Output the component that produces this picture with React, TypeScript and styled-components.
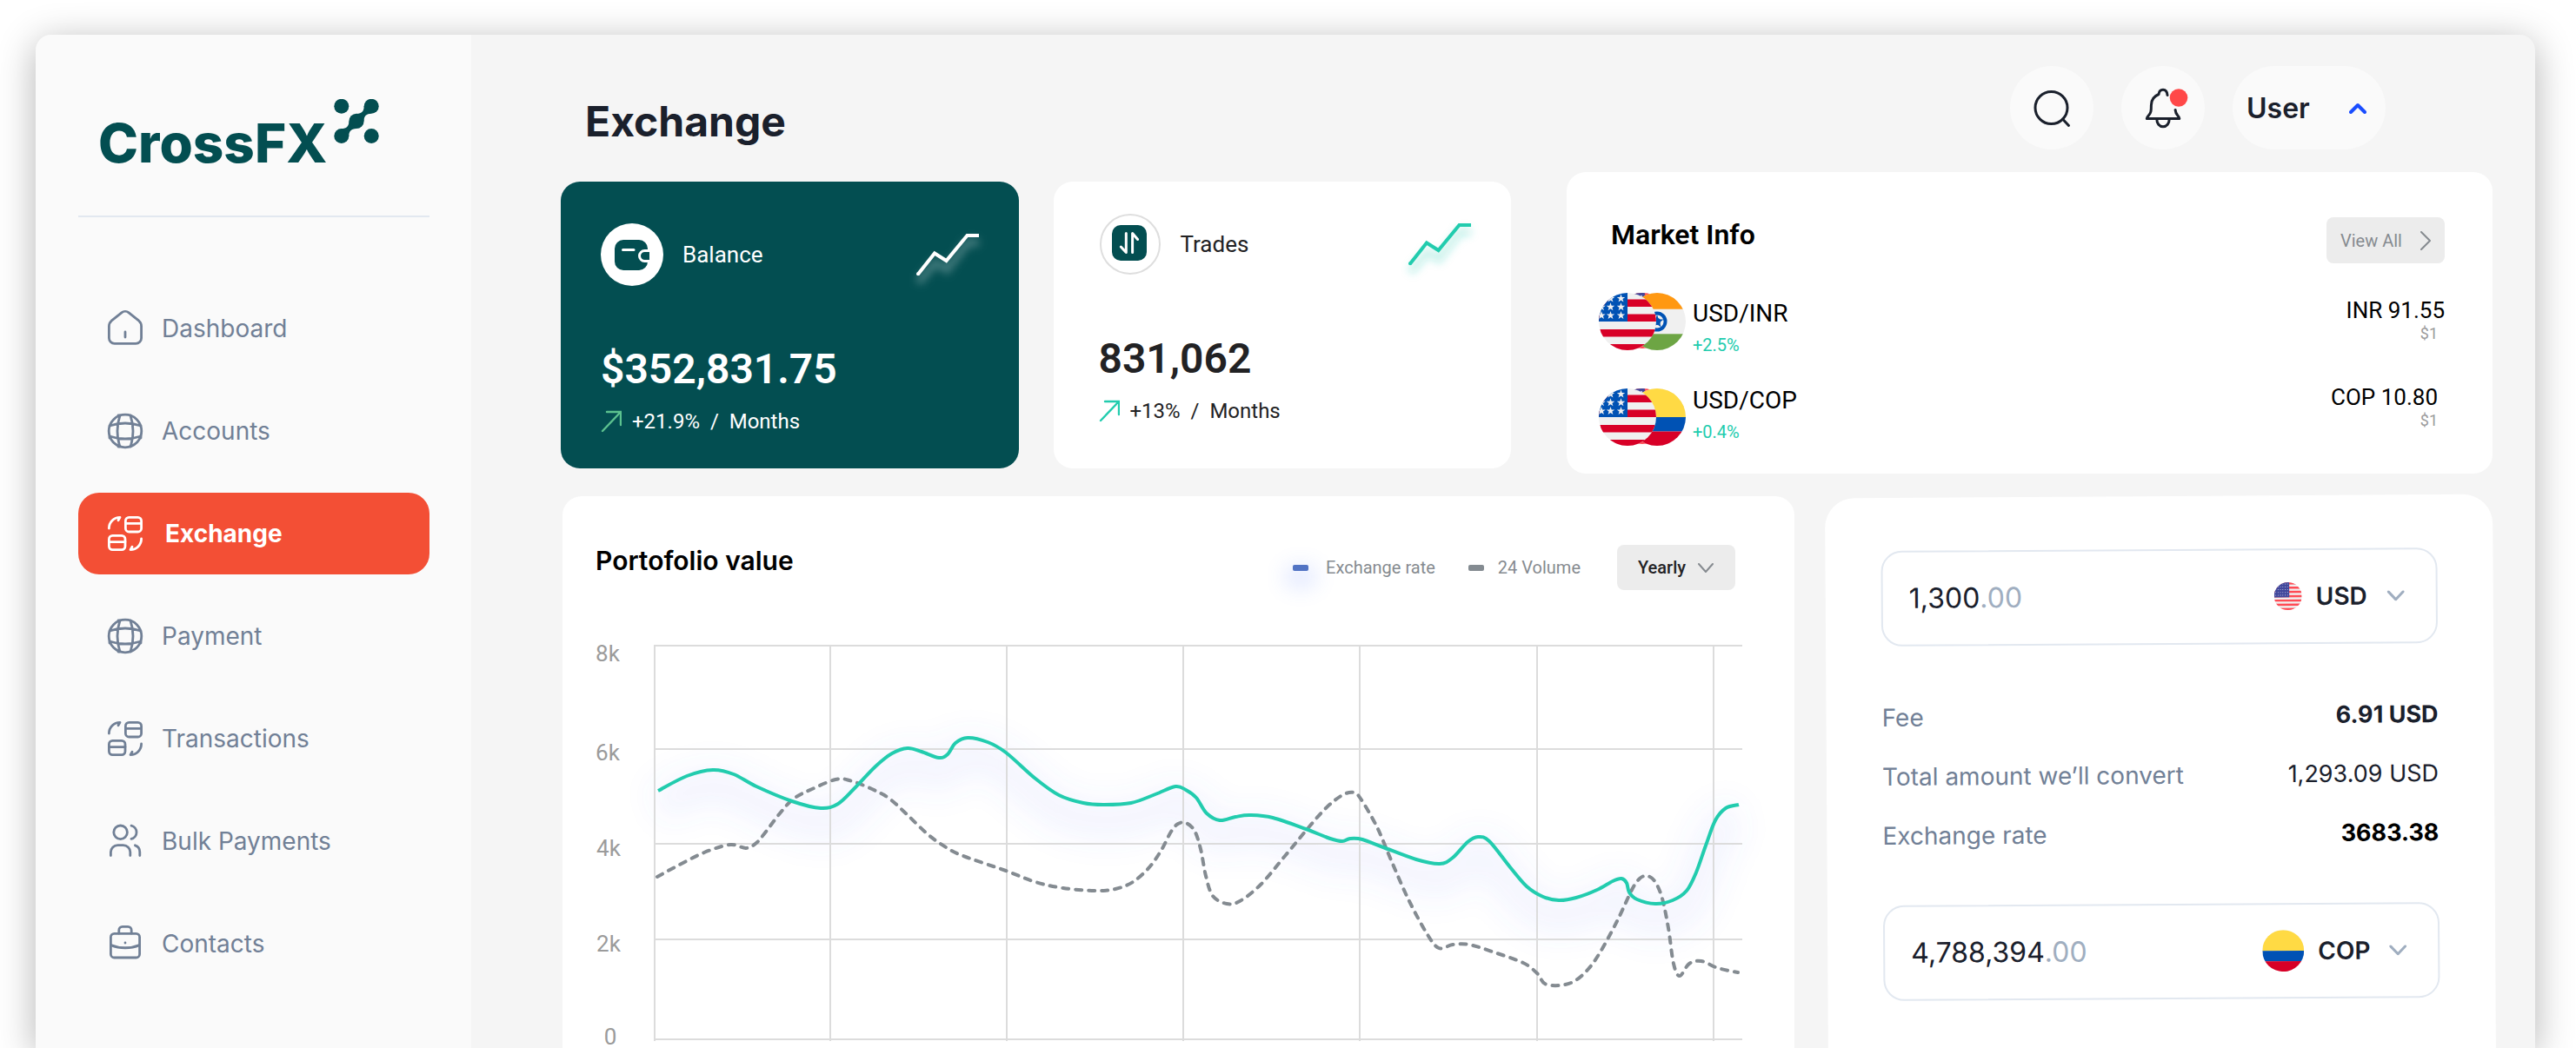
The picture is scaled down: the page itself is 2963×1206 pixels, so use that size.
import React from "react";
import styled, { createGlobalStyle, css } from "styled-components";

const inter = `Inter, "Noto Sans", sans-serif`;
const roboto = `Roboto, "Noto Sans", sans-serif`;

const colors = {
  brand: "#034e51",
  accent: "#f34f35",
  mint: "#22ccae",
  ink: "#1a202c",
  slate: "#718096",
  mist: "#a0aec0",
  line: "#e2e8f0",
  grey: "#868b90",
};

const GlobalStyle = createGlobalStyle`
  *, *::before, *::after { box-sizing: border-box; }
  body { margin: 0; background: #fff; font-family: ${inter}; color: ${colors.ink}; }
  h1, h2, p, ul, dl, dd { margin: 0; padding: 0; }
  ul { list-style: none; }
  a { text-decoration: none; color: inherit; }
  button, input, select { font: inherit; color: inherit; border: 0; margin: 0; background: none; }
  svg { display: block; flex: none; }
`;

/* ---------- shell ---------- */

const Page = styled.div`
  display: flex;
  min-height: 100vh;
  padding: 40px 47px 0 41px;
  overflow: hidden;
`;

const Shell = styled.div`
  flex: 1;
  display: flex;
  min-width: 0;
  border-radius: 18px 18px 0 0;
  overflow: hidden;
  background: #f5f5f5;
  box-shadow: 0 8px 44px rgba(0, 0, 0, 0.3);
`;

const Sidebar = styled.aside`
  flex: 0 0 501px;
  padding: 74px 48px 0 49px;
  background: #fafafa;
`;

const Logo = styled.a`
  display: flex;
  align-items: flex-start;
  gap: 8px;
  padding-left: 23px;
  padding-bottom: 57px;
  border-bottom: 2px solid ${colors.line};
  color: ${colors.brand};
`;

const LogoText = styled.span`
  padding-top: 25px;
  font: 800 62px/52px ${inter};
`;

const Nav = styled.nav`
  margin-top: 81px;
`;

const NavList = styled.ul`
  display: flex;
  flex-direction: column;
  gap: 24px;
`;

const NavLink = styled.a<{ $active?: boolean }>`
  display: flex;
  align-items: center;
  gap: 18px;
  height: 94px;
  padding-left: 30px;
  border-radius: 24px;
  font-size: 28px;
  line-height: 36px;
  color: ${colors.slate};
  ${(p) =>
    p.$active &&
    css`
      gap: 22px;
      font-weight: 700;
      color: #fff;
      background: ${colors.accent};
    `}
`;

const Main = styled.main`
  flex: 1;
  min-width: 0;
  display: flex;
  flex-direction: column;
`;

/* ---------- header ---------- */

const Header = styled.header`
  display: flex;
  align-items: center;
  gap: 32px;
  padding: 36px 172px 26px 131px;
`;

const PageTitle = styled.h1`
  flex: 1;
  align-self: flex-end;
  font-size: 48px;
  font-weight: 700;
  line-height: 64px;
`;

const RoundButton = styled.button`
  width: 96px;
  height: 96px;
  padding: 0;
  border-radius: 50%;
  background: #fafafa;
`;

const UserButton = styled.button`
  display: flex;
  align-items: center;
  justify-content: space-between;
  width: 176px;
  height: 96px;
  padding: 0 22px 0 16px;
  border-radius: 48px;
  background: #fafafa;
  font-size: 32px;
  font-weight: 600;
`;

/* ---------- layout rows ---------- */

const TopRow = styled.div`
  display: grid;
  grid-template-columns: 1093fr 1065fr;
  gap: 64px;
  padding: 0 49px 0 103px;
`;

const Stats = styled.div`
  display: grid;
  grid-template-columns: 1fr 1fr;
  gap: 40px;
  padding: 11px 0 6px;
`;

const BottomRow = styled.div`
  flex: 1;
  display: grid;
  grid-template-columns: 1417fr 768fr;
  gap: 37px;
  padding: 26px 47px 0 105px;
`;

const Card = styled.section`
  min-width: 0;
  border-radius: 22px;
  background: #fff;
`;

/* ---------- stat cards ---------- */

const StatCard = styled(Card)<{ $dark?: boolean }>`
  padding: ${(p) => (p.$dark ? "48px 45px 40px 46px" : "36px 45px 52px 52px")};
  font-family: ${roboto};
  color: ${(p) => (p.$dark ? "#fff" : "#222224")};
  background: ${(p) => (p.$dark ? colors.brand : "#fff")};
`;

const StatHead = styled.div`
  display: flex;
  align-items: center;
  gap: 22px;
`;

const StatLabel = styled.h2`
  flex: 1;
  font-size: 26px;
  font-weight: 400;
  line-height: 36px;
`;

const StatValue = styled.p`
  margin-top: 68px;
  font-size: 48px;
  font-weight: 600;
  line-height: 56px;
`;

const StatChange = styled.p`
  display: flex;
  align-items: center;
  gap: 12px;
  margin-top: 18px;
  font-size: 24px;
  line-height: 28px;
  white-space: pre;
`;

/* ---------- market info ---------- */

const MarketCard = styled(Card)`
  padding: 52px 55px 32px 37px;
  font-family: ${roboto};
  color: #000;
`;

const MarketHead = styled.div`
  display: flex;
  align-items: flex-start;
  justify-content: space-between;
  padding-left: 14px;
`;

const MarketTitle = styled.h2`
  font-size: 32px;
  font-weight: 600;
  line-height: 40px;
`;

const ViewAll = styled.a`
  display: flex;
  align-items: center;
  justify-content: space-between;
  width: 136px;
  height: 53px;
  padding: 0 16px;
  border-radius: 8px;
  background: #ececec;
  font-size: 20px;
  color: ${colors.grey};
`;

const PairList = styled.ul`
  display: flex;
  flex-direction: column;
  gap: 24px;
  margin-top: 34px;
`;

const PairRow = styled.li`
  display: flex;
  align-items: flex-end;
  gap: 8px;
  height: 76px;
`;

const FlagStack = styled.div<{ $raised?: boolean }>`
  display: flex;
  align-self: ${(p) => (p.$raised ? "flex-start" : "flex-end")};
  isolation: isolate;
  > * { position: relative; }
  > :nth-child(1) { z-index: 2; }
  > :nth-child(2) { z-index: 0; margin: 0 -48px; }
  > :nth-child(3) { z-index: 1; }
`;

const PairName = styled.div`
  flex: 1;
  font-size: 28px;
  line-height: 40px;
  small {
    display: block;
    font-size: 20px;
    line-height: 32px;
    color: ${colors.mint};
  }
`;

const PairRate = styled.div<{ $inset?: boolean }>`
  align-self: flex-start;
  padding-top: 6px;
  padding-right: ${(p) => (p.$inset ? "8px" : "0")};
  font-size: 26px;
  line-height: 28px;
  text-align: right;
  small {
    display: block;
    padding-right: ${(p) => (p.$inset ? "0" : "8px")};
    font-size: 18px;
    line-height: 26px;
    color: #9b9b9b;
  }
`;

/* ---------- portfolio chart ---------- */

const ChartCard = styled(Card)`
  padding: 56px 60px 0 38px;
  border-radius: 22px 22px 0 0;
  font-family: ${roboto};
`;

const ChartHead = styled.div`
  display: flex;
  align-items: center;
  padding-right: 8px;
`;

const ChartTitle = styled.h2`
  flex: 1;
  align-self: flex-start;
  font-family: ${inter};
  font-size: 30px;
  font-weight: 600;
  line-height: 36px;
  color: #000;
`;

const LegendItem = styled.span<{ $glow?: boolean }>`
  display: flex;
  align-items: center;
  gap: ${(p) => (p.$glow ? "20px" : "16px")};
  margin-right: ${(p) => (p.$glow ? "38px" : "42px")};
  font-size: 20px;
  color: ${colors.grey};
  &::before {
    content: "";
    width: 18px;
    height: 7px;
    border-radius: 2px;
    background: ${(p) => (p.$glow ? "#5274c4" : "#848b91")};
    box-shadow: ${(p) => (p.$glow ? "0 10px 24px 8px rgba(80, 115, 255, 0.18)" : "none")};
  }
`;

const Dropdown = styled.span`
  display: inline-grid;
  align-items: center;
  > * { grid-area: 1 / 1; }
  > svg { justify-self: end; pointer-events: none; }
`;

const PeriodDropdown = styled(Dropdown)`
  width: 136px;
  height: 52px;
  border-radius: 8px;
  background: #ececec;
  > svg { margin-right: 25px; }
`;

const PeriodSelect = styled.select`
  appearance: none;
  width: 100%;
  height: 100%;
  padding: 0 0 0 24px;
  font-size: 20px;
  font-weight: 500;
  color: #222224;
`;

const ChartSvg = styled.svg`
  width: 100%;
  height: auto;
  margin-top: 61px;
  overflow: visible;
  text {
    font: 26px ${roboto};
    fill: #9b9b9b;
    text-anchor: middle;
  }
`;

/* ---------- converter ---------- */

const Converter = styled(Card)`
  margin-bottom: -12px;
  padding: 61px 64px 0;
  border-radius: 34px 34px 0 0;
  transform: rotate(-0.35deg);
`;

const Field = styled.div`
  display: flex;
  align-items: center;
  height: 110px;
  padding: 0 36px 0 30px;
  border: 2px solid ${colors.line};
  border-radius: 24px;
`;

const AmountLabel = styled.label`
  flex: 1;
  display: flex;
  align-items: center;
  font-size: 32px;
  line-height: 40px;
  color: ${colors.mist};
`;

const AmountInput = styled.input`
  field-sizing: content;
  height: 40px;
  padding: 0;
  color: ${colors.ink};
`;

const CurrencyDropdown = styled(Dropdown)`
  width: 102px;
  margin-left: 16px;
`;

const CurrencySelect = styled.select`
  appearance: none;
  width: 100%;
  padding: 0;
  font-size: 28px;
  font-weight: 600;
`;

const Breakdown = styled.dl`
  display: flex;
  flex-direction: column;
  gap: 36px;
  padding: 66px 0 64px;
`;

const BreakdownRow = styled.div`
  display: flex;
  justify-content: space-between;
  line-height: 32px;
  font-size: 28px;
  color: ${colors.slate};
`;

const BreakdownValue = styled.dd<{ $bold?: boolean; $black?: boolean }>`
  font-size: 27px;
  font-weight: ${(p) => (p.$bold ? 700 : 400)};
  color: ${(p) => (p.$black ? "#000" : colors.ink)};
`;

/* ---------- icons ---------- */

const NavIcon = ({ children }: { children: React.ReactNode }) => (
  <svg width="48" height="48" viewBox="0 0 24 24" fill="none" stroke="currentColor" strokeWidth="1.4" strokeLinecap="round" strokeLinejoin="round" aria-hidden>
    {children}
  </svg>
);

const HomeIcon = () => (
  <NavIcon>
    <path d="M9.9 2.9 4.1 7.6C3.2 8.4 2.7 9.5 2.7 10.7v6.8a3.2 3.2 0 0 0 3.2 3.2h12.2a3.2 3.2 0 0 0 3.2-3.2v-6.8c0-1.2-.5-2.3-1.4-3.1L14.1 2.9c-1.2-1-3-1-4.2 0Z" />
    <path d="M12 17v-3" />
  </NavIcon>
);

const GlobeIcon = () => (
  <NavIcon>
    <circle cx="12" cy="12" r="9.4" />
    <path d="M8 3h1a28.424 28.424 0 0 0 0 18H8M15 3a28.424 28.424 0 0 1 0 18M3 16v-1a28.424 28.424 0 0 0 18 0v1M3 9a28.424 28.424 0 0 1 18 0" />
  </NavIcon>
);

const SwapCardsIcon = () => (
  <NavIcon>
    <rect x="12.2" y="2.7" width="9.1" height="8.3" rx="2" />
    <path d="M12.2 6.2h9.1" />
    <rect x="2.7" y="13.2" width="9.3" height="8.1" rx="2" />
    <path d="M2.7 16.8H12M2.7 9c0-3.5 2.8-6.3 6.3-6.3L8 4.4M21.3 15c0 3.5-2.8 6.3-6.3 6.3l1-1.7" />
  </NavIcon>
);

const UsersIcon = () => (
  <NavIcon>
    <circle cx="9.3" cy="6.9" r="3.9" />
    <path d="M3.7 20.3v-2a4 4 0 0 1 4-4h3.2a4 4 0 0 1 4 4v2M15.5 3.1a3.9 3.9 0 0 1 0 7.6M17.7 14.4c1.7.5 2.7 2 2.7 3.9v2" />
  </NavIcon>
);

const BriefcaseIcon = () => (
  <NavIcon>
    <rect x="3.7" y="6.2" width="16.6" height="13.8" rx="2" />
    <path d="M8.4 6V4.2a2 2 0 0 1 2-2h3.2a2 2 0 0 1 2 2V6M3.8 12.8c5 2.1 11.4 2.1 16.4 0M12 11.5v.01" />
  </NavIcon>
);

const LogoMark = () => (
  <svg width="52" height="52" viewBox="0 0 52 52" fill="currentColor" aria-hidden>
    <circle cx="8.8" cy="8.3" r="8.5" />
    <circle cx="43.2" cy="8.3" r="8.5" />
    <circle cx="8.8" cy="42.5" r="8.5" />
    <circle cx="43.2" cy="42.5" r="8.5" />
    <circle cx="26" cy="25.4" r="8.6" />
    <path d="M34.7 8c0 5.5-2.2 9-8.7 9l8.6 8.5c0-6 3-8.7 8.6-8.7ZM17.3 43c0-5.5 2.2-9 8.7-9l-8.6-8.5c0 6-3 8.5-8.6 8.5Z" />
  </svg>
);

const SearchIcon = () => (
  <svg width="96" height="96" viewBox="0 0 96 96" fill="none" stroke={colors.ink} strokeWidth="3" strokeLinecap="round" aria-hidden>
    <circle cx="47.5" cy="48" r="18.5" />
    <path d="m60.5 61 7 7.5" />
  </svg>
);

const BellIcon = () => (
  <svg width="96" height="96" viewBox="0 0 96 96" fill="none" stroke={colors.ink} strokeWidth="3" strokeLinecap="round" strokeLinejoin="round" aria-hidden>
    <path d="M53 33.5c-.3-3.9-2.2-6.3-5-6.3s-4.7 2.2-5 5.3c-5.6 2.3-8.6 7.3-8.6 12.5 0 6.5-.2 9-2.9 11.8-1.1 1.2-1.9 2.2-2.2 3.7h37.5c-.3-1.5-1-2.5-2.1-3.7-1.6-1.7-2.3-3.6-2.6-6.3" />
    <path d="M40.8 61c0 5 2.9 8.7 7.2 8.7s7.2-3.7 7.2-8.7" />
    <circle cx="66" cy="36.5" r="10.3" fill="#ff4848" stroke="none" />
  </svg>
);

const Chevron = ({ w, h, color, stroke }: { w: number; h: number; color: string; stroke: number }) => (
  <svg width={w} height={h} viewBox={`0 0 ${w} ${h}`} fill="none" stroke={color} strokeWidth={stroke} strokeLinecap="round" strokeLinejoin="round" aria-hidden>
    <path d={`M${stroke / 2} ${stroke / 2} ${w / 2} ${h - stroke / 2} ${w - stroke / 2} ${stroke / 2}`} />
  </svg>
);

const WalletBadge = () => (
  <svg width="72" height="72" viewBox="0 0 72 72" aria-hidden>
    <circle cx="36" cy="36" r="36" fill="#fff" />
    <rect x="16" y="19" width="38" height="35" rx="10" fill={colors.brand} />
    <path d="M58 31.5h-7.5a5.5 5.5 0 0 0 0 12H58" fill={colors.brand} stroke="#fff" strokeWidth="3" />
    <path d="M56 29.5h4v16h-4z" fill="#fff" />
    <path d="M25.5 30.5h12.5" stroke="#fff" strokeWidth="3" strokeLinecap="round" />
  </svg>
);

const TradesBadge = () => (
  <svg width="72" height="72" viewBox="0 0 72 72" fill="none" aria-hidden>
    <circle cx="36" cy="36" r="34" fill="#fff" stroke="#dedede" strokeWidth="2" />
    <rect x="15" y="14" width="40" height="41" rx="10" fill={colors.brand} />
    <path d="M31.3 23.5v22l-6-6.5M38.6 45.5v-22l6 7" stroke="#fff" strokeWidth="3" strokeLinecap="round" strokeLinejoin="round" />
  </svg>
);

const Spark = ({ color, id, glow }: { color: string; id: string; glow: number }) => (
  <svg width="74" height="50" viewBox="0 0 74 50" fill="none" overflow="visible" aria-hidden>
    <filter id={id} x="-40%" y="-40%" width="180%" height="200%">
      <feGaussianBlur stdDeviation="5" />
    </filter>
    <path d="M3 57 23 34l13 8L60 11h13" stroke={color} strokeWidth="9" strokeOpacity={glow} filter={`url(#${id})`} />
    <path d="M3 47.5 22 23.5l13.5 8.5L59.5 3H73" stroke={color} strokeWidth="4" />
    <circle cx="3" cy="47.3" r="2" fill={color} />
  </svg>
);

const UpArrow = ({ color }: { color: string }) => (
  <svg width="24" height="28" viewBox="0 0 24 28" fill="none" stroke={color} strokeWidth="2.4" strokeLinecap="round" aria-hidden>
    <path d="M2 25 23 3M7 3h16v15" />
  </svg>
);

/* ---------- flags ---------- */

const star = (cx: number, cy: number, r: number) =>
  Array.from({ length: 10 }, (_, i) => {
    const a = -Math.PI / 2 + (i * Math.PI) / 5;
    const d = i % 2 ? r * 0.4 : r;
    return `${(cx + d * Math.cos(a)).toFixed(2)},${(cy + d * Math.sin(a)).toFixed(2)}`;
  }).join(" ");

const RoundFlag = ({ size, id, label, children }: { size: number; id: string; label: string; children: React.ReactNode }) => (
  <svg width={size} height={size} viewBox="0 0 66 66" role="img" aria-label={label}>
    <clipPath id={id}>
      <circle cx="33" cy="33" r="33" />
    </clipPath>
    <g clipPath={`url(#${id})`}>
      <rect width="66" height="66" fill="#f0f0f0" />
      {children}
    </g>
  </svg>
);

const UsFlag = ({ id }: { id: string }) => (
  <RoundFlag size={66} id={id} label="United States">
    {[7.5, 24.5, 42, 59].map((y) => (
      <rect key={y} y={y} width="66" height="8.5" fill="#d80027" />
    ))}
    <rect width="33" height="33" fill="#0052b4" />
    {[3, 13.5, 25.5].map((x) => [6.5, 16.3, 26].map((y) => <polygon key={`${x}-${y}`} points={star(x, y, 5)} fill="#f0f0f0" />))}
  </RoundFlag>
);

const SoftUsFlag = ({ id, size }: { id: string; size: number }) => (
  <RoundFlag size={size} id={id} label="United States">
    {Array.from({ length: 7 }, (_, i) => (
      <rect key={i} y={i * 10.15} width="66" height="5.1" fill="#ff4b55" />
    ))}
    <rect width="36" height="35.5" fill="#41479b" />
    {Array.from({ length: 30 }, (_, i) => (
      <circle key={i} cx={4 + (i % 6) * 5.6} cy={4 + Math.floor(i / 6) * 6.6} r="1.1" fill="#c9cbe6" />
    ))}
  </RoundFlag>
);

const IndiaFlag = ({ id }: { id: string }) => (
  <RoundFlag size={66} id={id} label="India">
    <rect width="66" height="18.7" fill="#ff9811" />
    <rect y="47.3" width="66" height="19" fill="#6da544" />
    <circle cx="33" cy="33" r="11.5" fill="#0052b4" />
    <circle cx="33" cy="33" r="7.6" fill="#f0f0f0" />
    <polygon points={star(33, 33, 8)} fill="#0052b4" />
    <circle cx="33" cy="33" r="4" fill="#0052b4" />
  </RoundFlag>
);

const ColombiaFlag = ({ id, size }: { id: string; size: number }) => (
  <RoundFlag size={size} id={id} label="Colombia">
    <rect width="66" height="33" fill="#ffda44" />
    <rect y="33" width="66" height="16.5" fill="#0052b4" />
    <rect y="49.5" width="66" height="16.5" fill="#d80027" />
  </RoundFlag>
);

/* ---------- chart ---------- */

type Point = [number, number];

const ratePoints: Point[] = [
  [5, 168], [38, 151], [68, 144], [92, 149], [118, 163], [159, 180], [192, 188], [212, 183], [232, 164], [255, 140],
  [274, 125], [292, 119], [308, 123], [328, 130], [338, 126], [347, 113], [361, 107], [384, 112], [405, 124],
  [439, 154], [466, 173], [494, 182], [517, 184], [549, 182], [577, 172], [600, 163], [612, 167], [624, 176],
  [636, 194], [651, 202], [669, 198], [686, 196], [712, 199], [750, 212], [778, 223], [792, 226], [801, 223],
  [815, 224], [839, 233], [877, 247], [904, 252], [919, 245], [936, 227], [948, 221], [961, 226], [985, 256],
  [1004, 278], [1023, 290], [1041, 294], [1061, 291], [1085, 282], [1103, 272], [1113, 269], [1119, 274],
  [1122, 285], [1131, 293], [1152, 298], [1172, 294], [1188, 283], [1199, 262], [1210, 231], [1221, 202],
  [1233, 188], [1248, 184],
];

const volumePoints: Point[] = [
  [4, 267], [26, 255], [58, 239], [88, 230], [106, 234], [118, 228], [129, 215], [145, 194], [161, 177], [182, 166],
  [209, 155], [225, 156], [251, 166], [271, 177], [292, 196], [315, 218], [336, 233], [356, 243], [405, 260],
  [439, 273], [471, 280], [508, 283], [531, 281], [551, 273], [570, 256], [584, 236], [595, 215], [603, 206],
  [612, 205], [622, 214], [629, 235], [635, 266], [643, 289], [659, 298], [674, 295], [698, 276], [726, 243],
  [750, 214], [773, 188], [792, 173], [805, 170], [813, 177], [832, 210], [849, 250], [868, 293], [889, 332],
  [903, 349], [919, 345], [938, 345], [967, 354], [1000, 366], [1016, 378], [1025, 390], [1042, 392],
  [1059, 387], [1075, 373], [1089, 353], [1108, 318], [1125, 282], [1134, 269], [1143, 266], [1152, 273],
  [1160, 292], [1167, 326], [1173, 367], [1180, 381], [1191, 367], [1205, 364], [1224, 372], [1247, 377],
];

/** Catmull-Rom spline through the points, written as cubic segments. */
const smooth = (pts: Point[]) =>
  pts.slice(1).reduce((d, p2, i) => {
    const p0 = pts[Math.max(i - 1, 0)];
    const p1 = pts[i];
    const p3 = pts[Math.min(i + 2, pts.length - 1)];
    const c1 = [p1[0] + (p2[0] - p0[0]) / 6, p1[1] + (p2[1] - p0[1]) / 6];
    const c2 = [p2[0] - (p3[0] - p1[0]) / 6, p2[1] - (p3[1] - p1[1]) / 6];
    return `${d} C${[...c1, ...c2, ...p2].map((n) => n.toFixed(1)).join(" ")}`;
  }, `M${pts[0].join(" ")}`);

const gridY = [
  { y: 1, label: "8k", textX: -53, textY: 19 },
  { y: 120, label: "6k", textX: -53, textY: 133 },
  { y: 229, label: "4k", textX: -52, textY: 243 },
  { y: 339, label: "2k", textX: -52, textY: 353 },
  { y: 454, label: "0", textX: -50, textY: 460 },
];
const gridX = [1, 203, 406, 609, 812, 1016, 1219];

const PortfolioChart = () => {
  const rate = smooth(ratePoints);
  return (
    <ChartSvg viewBox="-67 -2 1319 466" role="img" aria-label="Exchange rate and 24 hour volume">
      <filter id="rate-glow" x="-10%" y="-60%" width="120%" height="240%">
        <feGaussianBlur stdDeviation="17" />
      </filter>
      <path d={rate} transform="translate(0 18)" fill="none" stroke="#4f74f5" strokeOpacity="0.07" strokeWidth="44" filter="url(#rate-glow)" />
      <g stroke="#dcdcdc" strokeWidth="2">
        {gridY.map((g) => (
          <path key={g.y} d={`M0 ${g.y}H1252`} />
        ))}
        {gridX.map((x) => (
          <path key={x} d={`M${x} 1V456`} />
        ))}
      </g>
      {gridY.map((g) => (
        <text key={g.label} x={g.textX} y={g.textY}>
          {g.label}
        </text>
      ))}
      <path d={smooth(volumePoints)} fill="none" stroke="#848b91" strokeWidth="4" strokeDasharray="7 8" strokeLinecap="round" />
      <path d={rate} fill="none" stroke={colors.mint} strokeWidth="4" />
    </ChartSvg>
  );
};

/* ---------- app ---------- */

const navItems = [
  { label: "Dashboard", icon: <HomeIcon /> },
  { label: "Accounts", icon: <GlobeIcon /> },
  { label: "Exchange", icon: <SwapCardsIcon />, active: true },
  { label: "Payment", icon: <GlobeIcon /> },
  { label: "Transactions", icon: <SwapCardsIcon /> },
  { label: "Bulk Payments", icon: <UsersIcon /> },
  { label: "Contacts", icon: <BriefcaseIcon /> },
];

const AmountField = ({ id, name, whole, currency, flag }: { id: string; name: string; whole: string; currency: string; flag: React.ReactNode }) => (
  <Field>
    <AmountLabel htmlFor={id}>
      <AmountInput id={id} aria-label={name} defaultValue={whole} inputMode="decimal" />
      <span>.00</span>
    </AmountLabel>
    {flag}
    <CurrencyDropdown>
      <CurrencySelect aria-label={`${name} currency`} defaultValue={currency}>
        <option>USD</option>
        <option>COP</option>
      </CurrencySelect>
      <Chevron w={20} h={12} color={colors.mist} stroke={3} />
    </CurrencyDropdown>
  </Field>
);

export default function App() {
  return (
    <>
      <GlobalStyle />
      <Page>
        <Shell>
          <Sidebar>
            <Logo href="#">
              <LogoText>CrossFX</LogoText>
              <LogoMark />
            </Logo>
            <Nav aria-label="Main">
              <NavList>
                {navItems.map((item) => (
                  <li key={item.label}>
                    <NavLink href="#" $active={item.active} aria-current={item.active ? "page" : undefined}>
                      {item.icon}
                      {item.label}
                    </NavLink>
                  </li>
                ))}
              </NavList>
            </Nav>
          </Sidebar>

          <Main>
            <Header>
              <PageTitle>Exchange</PageTitle>
              <RoundButton type="button" aria-label="Search">
                <SearchIcon />
              </RoundButton>
              <RoundButton type="button" aria-label="Notifications">
                <BellIcon />
              </RoundButton>
              <UserButton type="button">
                User
                <svg width="20" height="13" viewBox="0 0 20 13" fill="none" stroke="#1a4dff" strokeWidth="4" strokeLinecap="round" strokeLinejoin="round" aria-hidden>
                  <path d="m2 11 8-8 8 8" />
                </svg>
              </UserButton>
            </Header>

            <TopRow>
              <Stats>
                <StatCard $dark>
                  <StatHead>
                    <WalletBadge />
                    <StatLabel>Balance</StatLabel>
                    <Spark color="#ffffff" id="spark-balance" glow={0.25} />
                  </StatHead>
                  <StatValue>$352,831.75</StatValue>
                  <StatChange>
                    <UpArrow color="#5cc28f" />
                    {"+21.9%  /  Months"}
                  </StatChange>
                </StatCard>
                <StatCard>
                  <StatHead>
                    <TradesBadge />
                    <StatLabel>Trades</StatLabel>
                    <Spark color={colors.mint} id="spark-trades" glow={0.25} />
                  </StatHead>
                  <StatValue>831,062</StatValue>
                  <StatChange>
                    <UpArrow color={colors.mint} />
                    {"+13%  /  Months"}
                  </StatChange>
                </StatCard>
              </Stats>

              <MarketCard>
                <MarketHead>
                  <MarketTitle>Market Info</MarketTitle>
                  <ViewAll href="#">
                    View All
                    <svg width="12" height="22" viewBox="0 0 12 22" fill="none" stroke={colors.grey} strokeWidth="2" strokeLinecap="round" strokeLinejoin="round" aria-hidden>
                      <path d="m1 1 10 10L1 21" />
                    </svg>
                  </ViewAll>
                </MarketHead>
                <PairList>
                  <PairRow>
                    <FlagStack $raised>
                      <UsFlag id="flag-us-1" />
                      <SoftUsFlag id="flag-soft-1" size={64} />
                      <IndiaFlag id="flag-in" />
                    </FlagStack>
                    <PairName>
                      USD/INR<small>+2.5%</small>
                    </PairName>
                    <PairRate>
                      INR 91.55<small>$1</small>
                    </PairRate>
                  </PairRow>
                  <PairRow>
                    <FlagStack>
                      <UsFlag id="flag-us-2" />
                      <SoftUsFlag id="flag-soft-2" size={64} />
                      <ColombiaFlag id="flag-co-1" size={66} />
                    </FlagStack>
                    <PairName>
                      USD/COP<small>+0.4%</small>
                    </PairName>
                    <PairRate $inset>
                      COP 10.80<small>$1</small>
                    </PairRate>
                  </PairRow>
                </PairList>
              </MarketCard>
            </TopRow>

            <BottomRow>
              <ChartCard>
                <ChartHead>
                  <ChartTitle>Portofolio value</ChartTitle>
                  <LegendItem $glow>Exchange rate</LegendItem>
                  <LegendItem>24 Volume</LegendItem>
                  <PeriodDropdown>
                    <PeriodSelect aria-label="Period" defaultValue="Yearly">
                      <option>Yearly</option>
                      <option>Monthly</option>
                    </PeriodSelect>
                    <Chevron w={18} h={11} color={colors.grey} stroke={2} />
                  </PeriodDropdown>
                </ChartHead>
                <PortfolioChart />
              </ChartCard>

              <Converter as="form">
                <AmountField id="from" name="You send" whole="1,300" currency="USD" flag={<SoftUsFlag id="flag-from" size={32} />} />
                <Breakdown>
                  <BreakdownRow>
                    <dt>Fee</dt>
                    <BreakdownValue $bold>6.91 USD</BreakdownValue>
                  </BreakdownRow>
                  <BreakdownRow>
                    <dt>Total amount we’ll convert</dt>
                    <BreakdownValue>1,293.09 USD</BreakdownValue>
                  </BreakdownRow>
                  <BreakdownRow>
                    <dt>Exchange rate</dt>
                    <BreakdownValue $bold $black>
                      3683.38
                    </BreakdownValue>
                  </BreakdownRow>
                </Breakdown>
                <AmountField id="to" name="They receive" whole="4,788,394" currency="COP" flag={<ColombiaFlag id="flag-to" size={48} />} />
              </Converter>
            </BottomRow>
          </Main>
        </Shell>
      </Page>
    </>
  );
}
